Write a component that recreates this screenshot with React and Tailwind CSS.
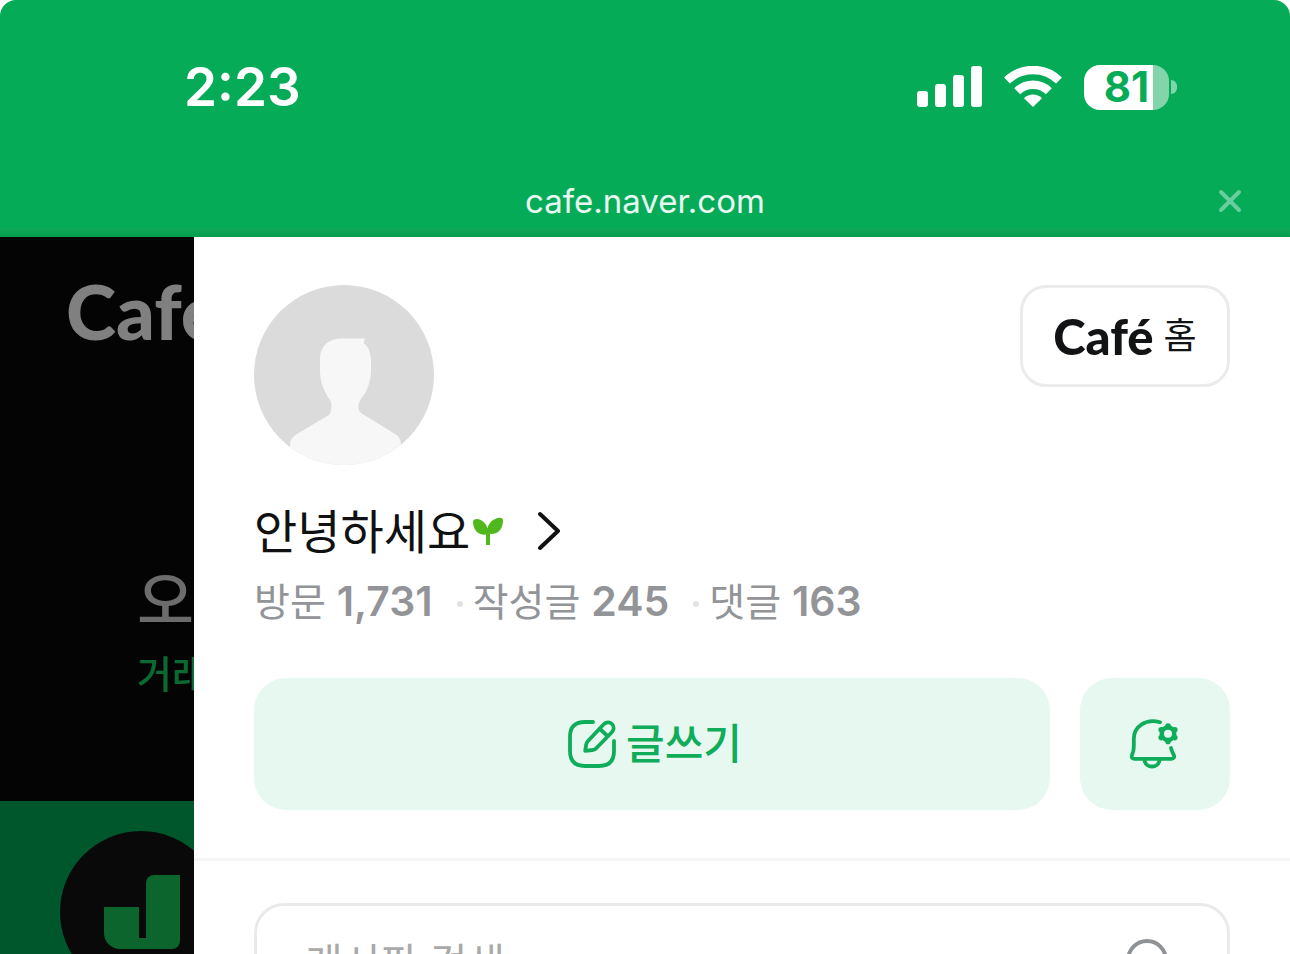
const SignalIcon = () => (
  <svg width="65" height="42" viewBox="0 0 65 42" fill="currentColor" aria-hidden="true">
    <rect x="0" y="25" width="11" height="16" rx="3" />
    <rect x="18" y="18" width="11" height="23" rx="3" />
    <rect x="36" y="9" width="11" height="32" rx="3" />
    <rect x="54" y="0" width="11" height="41" rx="3" />
  </svg>
);

const WifiIcon = () => (
  <svg width="58" height="42" viewBox="0 0 58 42" fill="none" stroke="currentColor" aria-hidden="true">
    <path d="M3 14.500a37.500 37.500 0 0 1 52 0" strokeWidth="8.500" />
    <path d="M13.200 25.200a22.700 22.700 0 0 1 31.600 0" strokeWidth="8.500" />
    <path d="M29 41l-9-8.800a13 13 0 0 1 18 0z" fill="currentColor" stroke="none" />
  </svg>
);

const SproutIcon = () => (
  <svg width="32" height="32" viewBox="0 0 32 32" fill="#4fb81c" aria-hidden="true">
    <path d="M14 30V19.500C7 20.500 1.500 16 1 7C1 4.500 3.500 3.500 6.500 4.200C11.500 5.500 14.500 9.500 15.500 13.500C16.500 8.500 20.500 3.800 27 2.800C30 2.400 31.400 4 31 7C30 15.500 25 19.500 18 18.800V30z" />
  </svg>
);

const WriteIcon = () => (
  <svg
    width="48"
    height="48"
    viewBox="0 0 48 48"
    fill="none"
    stroke="currentColor"
    strokeWidth="3.800"
    strokeLinecap="round"
    strokeLinejoin="round"
    aria-hidden="true"
  >
    <path d="M25 2H17C7 2 2 7 2 17V31C2 41 7 46 17 46H31C41 46 46 41 46 31V21" />
    <path d="M17.200 30.800L18.200 24.500Q18.600 22.500 20 21L35.500 4.500C38 2 41.500 1.500 44 4C46.500 6.500 46 10 43.600 12.500L28.500 28Q27 29.600 25 30z" />
    <path d="M32.500 9.500L39.500 16" />
  </svg>
);

const BellSettingIcon = () => (
  <svg
    width="50"
    height="50"
    viewBox="0 0 50 50"
    fill="none"
    stroke="currentColor"
    strokeWidth="3.800"
    strokeLinecap="round"
    strokeLinejoin="round"
    aria-hidden="true"
  >
    <path d="M30 3.300C16 -1 3.800 7.500 3.800 20V28C3.800 32 2.900 34 2 36C1.100 38 1.800 39.800 4.300 39.800H41.500C44 39.800 44.700 38 43.800 36C42.800 34 41.600 32 41 29" />
    <path d="M14.500 41.500C16 49.500 28 49.500 29.500 41.500" />
    <g stroke="none" fill="currentColor">
      <path
        fillRule="evenodd"
        d="M38 6.200a8.500 8.500 0 1 0 0 17a8.500 8.500 0 1 0 0-17zM38 10.700a4 4 0 1 1 0 8a4 4 0 1 1 0-8z"
      />
      <circle cx="38" cy="7" r="2.800" />
      <circle cx="38" cy="22.400" r="2.800" />
      <circle cx="31.200" cy="10.800" r="2.800" />
      <circle cx="44.800" cy="10.800" r="2.800" />
      <circle cx="31.200" cy="18.600" r="2.800" />
      <circle cx="44.800" cy="18.600" r="2.800" />
    </g>
  </svg>
);

const Avatar = () => (
  <div className="w-[180px] h-[180px] rounded-full overflow-hidden bg-[#dbdbdb]">
    <svg width="180" height="180" viewBox="0 0 180 180" fill="#f7f7f7" role="img" aria-label="프로필">
      <path d="M86 53.500H111L109.500 58C115 62 117 69 117 76V85C117 98 112 108 107 114C104 118 103 124 107 128L141 149Q147 152 147 160V180H36V160Q36 153 43 149L75 130C78 127 78 118 76 115C70 106 66 98 66 85V73C66 62 74 54 86 53.500z" />
    </svg>
  </div>
);

const stats = [
  { label: "방문", value: "1,731" },
  { label: "작성글", value: "245" },
  { label: "댓글", value: "163" },
];

const Header = () => (
  <header className="shrink-0 rounded-t-2xl bg-[#06ab58] text-white">

    {/* Status bar */}
    <div className="h-[174px] flex items-center justify-between pl-[184px] pr-[113px]">
      <span className="text-[53px] leading-none font-semibold">2:23</span>

      <div className="flex items-center gap-[22px]">
        <SignalIcon />
        <WifiIcon />
        <div className="flex items-center gap-0.5">
          <div className="w-[85px] h-[45px] rounded-2xl flex items-center justify-center bg-linear-to-r from-white from-81% to-[#82d5ab] to-81% text-[#06ab58] text-[42px] leading-none font-bold">
            81
          </div>
          <div className="w-1.5 h-3.5 rounded-r-full bg-[#82d5ab]"></div>
        </div>
      </div>
    </div>

    {/* Address */}
    <div className="h-[54px] grid grid-cols-[1fr_auto_1fr] items-center px-12">
      <span className="col-start-2 text-[33px] leading-none text-[#e9f8f0]">cafe.naver.com</span>
      <button type="button" aria-label="닫기" className="justify-self-end text-[#6acd9b]">
        <svg width="24" height="24" viewBox="0 0 24 24" fill="none" stroke="currentColor" strokeWidth="4" strokeLinecap="round">
          <path d="M3 3l18 18M21 3L3 21" />
        </svg>
      </button>
    </div>
    <div className="h-[9px] bg-linear-to-b from-[#12a85a] to-[#029c4b]"></div>

  </header>
);

/* Page behind the drawer */
const DimmedPage = () => (
  <div className="w-[194px] shrink-0 overflow-hidden whitespace-nowrap bg-[#040404] flex flex-col" aria-hidden="true">
    <div className="h-[323px] shrink-0 pl-[66px] pt-9 text-[76px] leading-[76px] font-[Lato] font-black text-[#808080]">
      Café
    </div>
    <div className="h-[241px] shrink-0 pl-[137px]">
      <p className="text-[62px] leading-[84px] font-medium text-[#6c6c6c]">오</p>
      <p className="text-[38px] leading-[60px] font-medium text-[#0b6a33]">거래</p>
    </div>
    <div className="flex-1 bg-[#00572c] pt-[30px] pl-[60px]">
      <div className="w-[162px] h-[162px] rounded-full bg-[#090909] pt-11 pl-11">
        <div className="flex items-end">
          <div className="w-[35px] h-[42px] rounded-bl-2xl bg-[#0b652c]"></div>
          <div className="w-[7px] h-[11px] bg-[#0b652c]"></div>
          <div className="w-[34px] h-[74px] rounded-tl-lg rounded-br-lg bg-[#0b652c]"></div>
        </div>
      </div>
    </div>
  </div>
);

const Drawer = () => (
  <main className="flex-1 min-w-0 bg-white">

    {/* Profile */}
    <section className="px-[60px] pt-12 pb-12 border-b-3 border-[#f4f5f6]">
      <div className="flex items-start justify-between">
        <Avatar />
        <a
          href="#home"
          className="w-[210px] h-[102px] flex items-center justify-center gap-2.5 border-3 border-[#ebebec] rounded-[26px] text-[#121315]"
        >
          <span className="font-[Lato] font-black text-[49px] leading-none">Café</span>
          <span className="text-[36px] leading-none">홈</span>
        </a>
      </div>

      <a href="#profile" className="mt-[34px] h-16 flex items-center gap-0.5 text-[#101112]">
        <span className="text-[47px] leading-none">안녕하세요</span>
        <SproutIcon />
        <svg className="ml-8" width="26" height="40" viewBox="0 0 26 40" fill="none" stroke="currentColor" strokeWidth="4" strokeLinecap="round" strokeLinejoin="round" aria-hidden="true">
          <path d="M2 3l18 17L2 37" />
        </svg>
      </a>

      <ul className="mt-3 h-[52px] flex items-center leading-none text-[#929497]">
        {stats.map((item, i) => (
          <li key={item.label} className="flex items-center">
            {i > 0 && <span className="w-1.5 h-1.5 mt-1.5 ml-6 mr-2.5 rounded-full bg-[#e1e2e3]"></span>}
            <span className="text-[39px]">
              {item.label} <strong className="text-[41px] font-semibold">{item.value}</strong>
            </span>
          </li>
        ))}
      </ul>

      <div className="mt-[51px] flex gap-[30px]">
        <button
          type="button"
          className="flex-1 h-[132px] pl-1.5 flex items-center justify-center gap-2.5 rounded-4xl bg-[#e7f8f0] text-[#0fac5a] text-[42px] leading-none font-medium"
        >
          <WriteIcon />
          글쓰기
        </button>
        <button
          type="button"
          aria-label="알림 설정"
          className="w-[150px] h-[132px] flex items-center justify-center rounded-4xl bg-[#e7f8f0] text-[#0fac5a]"
        >
          <BellSettingIcon />
        </button>
      </div>
    </section>

    {/* Search */}
    <form className="px-[60px] pt-[42px]">
      <div className="h-[120px] flex items-center px-12 border-3 border-[#e9eaeb] rounded-[30px]">
        <input
          type="search"
          aria-label="게시판 검색"
          placeholder="게시판 검색"
          className="flex-1 min-w-0 h-16 text-[41px] outline-none placeholder:text-[#a9a9a9]"
        />
        <button type="submit" aria-label="검색" className="text-[#8f9294]">
          <svg width="54" height="54" viewBox="0 0 54 54" fill="none" stroke="currentColor" strokeWidth="4" strokeLinecap="round">
            <circle cx="22" cy="24" r="19" />
            <path d="M36 38l12 12" />
          </svg>
        </button>
      </div>
    </form>

  </main>
);

const App = () => {
  return (
    <div className="h-screen flex flex-col overflow-hidden bg-white font-[Inter,'Noto_Sans_CJK_KR',sans-serif]">
      <Header />
      <div className="flex-1 min-h-0 flex overflow-hidden">
        <DimmedPage />
        <Drawer />
      </div>
    </div>
  );
};

export default App;
